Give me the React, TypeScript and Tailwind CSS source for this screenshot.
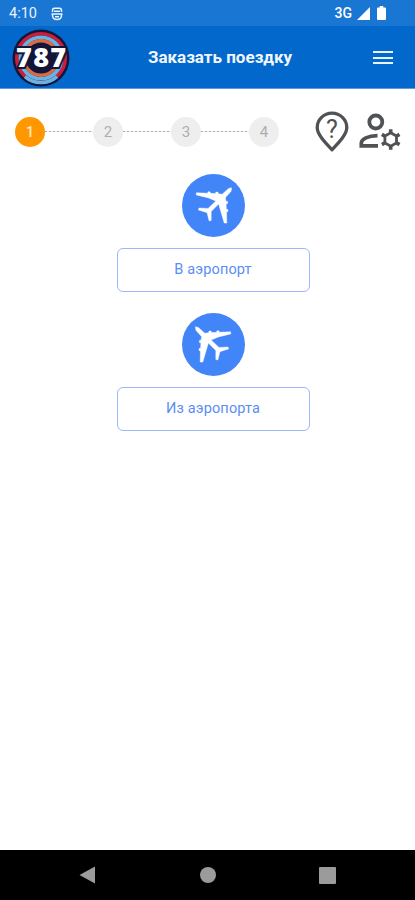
const STEPS = [1, 2, 3, 4];

function StatusBar() {
  return (
    <div className="flex h-[26px] items-center justify-between bg-[#1976d2] pr-[28px] pl-[9px] text-[#e8f3ff]">
      <div className="flex items-center gap-[14px] pt-[2px]">
        <span className="text-[14.5px] leading-none">4:10</span>
        <svg width="12" height="14" viewBox="0 0 12 14" fill="none" stroke="currentColor" strokeWidth="1.5">
          <path d="M1.5 5V3.5Q1.5 1.2 3.5 1.2H8.5Q10.5 1.2 10.5 3.5V5" />
          <path d="M3 4.2H9M0.5 6.9H11.5" />
          <path d="M1.5 7V8Q1.5 12.6 6 12.6T10.5 8V7M4 9.7H8" />
        </svg>
      </div>
      <div className="flex items-center text-white">
        <span className="text-[14px] leading-none font-medium">3G</span>
        <svg className="ml-[5px]" width="13" height="13" viewBox="0 0 13 13" fill="currentColor">
          <path d="M13 0V13H0Z" />
        </svg>
        <svg className="mr-px ml-[7px]" width="9" height="14" viewBox="0 0 9 14" fill="currentColor">
          <path d="M2.7 0H6.3V1.5H8Q9 1.5 9 2.5V13Q9 14 8 14H1Q0 14 0 13V2.5Q0 1.5 1 1.5H2.7Z" />
        </svg>
      </div>
    </div>
  );
}

function Logo() {
  return (
    <svg width="58" height="58" viewBox="0 0 58 58">
      <circle cx="29" cy="29" r="28.5" fill="#131638" />
      <circle cx="29" cy="29" r="24.2" fill="none" stroke="#c91f3d" strokeWidth="3.6" />
      <circle cx="29" cy="29" r="20.6" fill="none" stroke="#64b4e8" strokeWidth="3.8" />
      <path d="M13 47.6A24.4 24.4 0 0 0 45 47.6" fill="none" stroke="#64b4e8" strokeWidth="3.4" />
      <circle cx="29" cy="29" r="17.2" fill="none" stroke="#dc6b43" strokeWidth="3.4" />
      <text
        x="12 29.2 46.2"
        y="38"
        textAnchor="middle"
        className="fill-white stroke-[#131638] font-['Open_Sans',sans-serif] text-[27px] font-extrabold"
        strokeWidth="4"
        paintOrder="stroke"
      >
        787
      </text>
    </svg>
  );
}

function Header() {
  return (
    <header className="flex h-[63px] items-center justify-between border-b border-[#5c9ce0] bg-[#0268cb] pt-px pr-[22px] pl-3">
      <Logo />
      <h1 className="pr-[3px] pt-px text-[17px] font-bold text-[#f0f7ff]">Заказать поездку</h1>
      <button aria-label="Меню" className="flex w-5 flex-col gap-[3.5px]">
        <span className="h-[2px] bg-[#e8f3ff]" />
        <span className="h-[2px] bg-[#e8f3ff]" />
        <span className="h-[2px] bg-[#e8f3ff]" />
      </button>
    </header>
  );
}

function Stepper() {
  return (
    <div className="flex items-center">
      {STEPS.map((step) => (
        <div key={step} className="flex items-center">
          {step > 1 && (
            <span className="h-px w-12 bg-[repeating-linear-gradient(90deg,#adadad_0_2px,#ededed_2px_4px)]" />
          )}
          <span
            className={`flex size-[30px] items-center justify-center rounded-full pt-px text-[15px] ${
              step === 1 ? "bg-[#ff9800] font-medium text-[#ffe6bd]" : "bg-[#eeeeee] text-[#adadad]"
            }`}
          >
            {step}
          </span>
        </div>
      ))}
    </div>
  );
}

function HelpPin() {
  return (
    <svg width="34" height="42" viewBox="0 0 34 42" fill="none">
      <path
        d="M17 38.8C10 31.5 2.2 23.5 2.2 16.6A14.8 14.4 0 0 1 31.8 16.6C31.8 23.5 24 31.5 17 38.8Z"
        stroke="#505255"
        strokeWidth="3.3"
        strokeLinejoin="round"
      />
      <text x="17" y="26.5" textAnchor="middle" className="fill-[#505255] text-[25px]">
        ?
      </text>
    </svg>
  );
}

function AccountSettings() {
  return (
    <svg width="42" height="38" viewBox="0 0 42 38" fill="none" stroke="#505255">
      <circle cx="16.8" cy="9" r="6.5" strokeWidth="3.8" />
      <path d="M18.5 22.6C9 22.8 2.3 26 2.3 30.2V32.9H19" strokeWidth="3.7" />
      <path d="M31.7 19.8L37.5 23.15V29.85L31.7 33.2L25.9 29.85V23.15Z" strokeWidth="2.8" />
      <path
        d="M31.7 20V16.2M31.7 33V36.8M26 23.2L22.9 21.4M37.4 29.8L40.5 31.6M26 29.8L22.9 31.6M37.4 23.2L40.5 21.4"
        strokeWidth="3.6"
      />
    </svg>
  );
}

function PlaneBadge({ mirrored = false }: { mirrored?: boolean }) {
  return (
    <div className="size-[63px] rounded-full bg-[#4285f9]">
      <svg className={mirrored ? "-scale-x-100" : ""} width="63" height="63" viewBox="0 0 63 63">
        <path
          d="M49.6 13.7L46.6 14.4L40.2 20.2L36.4 19.8L36 18.1H33.8L33.6 19.6L28.6 19.3L28 17.8H26L25.6 19.2L14.4 18.7L14.2 20.9L26.5 23.9L33.8 27L26 34.4L17 34L16.4 36L24.4 38.4L25.2 39.2L27.1 46.9L29.2 46.5L29.2 37.6L36.6 30.1L42.2 49.1L44.8 49.1L44.6 37.9L46 37.4V35.6L44.4 35.2L44.1 29.9L45.6 29.6V27.4L43.8 27L43.5 23.6L49.1 17.3Z"
          fill="#fff"
          stroke="#fff"
          strokeWidth="0.4"
          strokeLinejoin="round"
        />
      </svg>
    </div>
  );
}

function DirectionOption({ label, mirrored }: { label: string; mirrored?: boolean }) {
  return (
    <div className="flex flex-col items-center gap-[11px]">
      <PlaneBadge mirrored={mirrored} />
      <button className="h-11 w-[193px] rounded-[6px] border border-[#9db7fb] pb-px text-[14.5px] tracking-[0.15px] text-[#5a8df5]">
        {label}
      </button>
    </div>
  );
}

function NavBar() {
  return (
    <nav className="flex h-[50px] items-center justify-between bg-black pr-[79px] pl-[79px]">
      <svg width="17" height="18" viewBox="0 0 17 18" fill="#9b9b9b">
        <path d="M16 0.5V17.5L0.5 9Z" />
      </svg>
      <span className="size-4 rounded-full bg-[#9b9b9b]" />
      <span className="size-[17px] rounded-[1px] bg-[#9b9b9b]" />
    </nav>
  );
}

export default function App() {
  return (
    <div className="flex h-[900px] w-[415px] flex-col overflow-hidden bg-white font-[Roboto,sans-serif]">
      <StatusBar />
      <Header />
      <main className="flex-1">
        <div className="flex h-[85px] items-center justify-between pr-[14px] pl-[15px]">
          <Stepper />
          <div className="flex items-center gap-[10px]">
            <HelpPin />
            <AccountSettings />
          </div>
        </div>
        <div className="flex flex-col items-center gap-[21px] pl-[11px]">
          <DirectionOption label="В аэропорт" />
          <DirectionOption label="Из аэропорта" mirrored />
        </div>
      </main>
      <NavBar />
    </div>
  );
}
